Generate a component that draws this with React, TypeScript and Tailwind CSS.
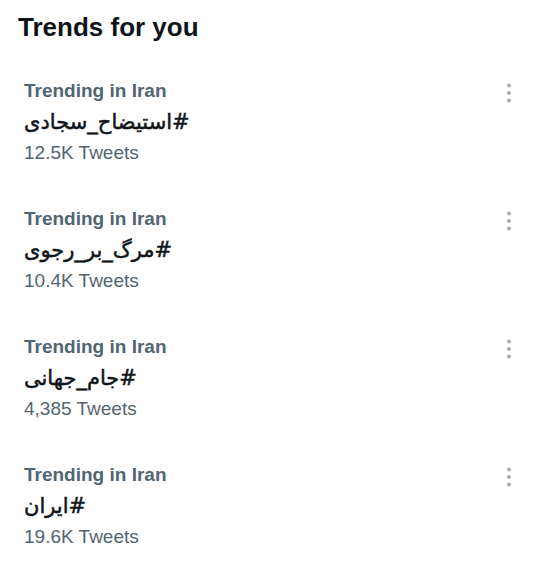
const TRENDS = [
  { tag: '#استیضاح_سجادی', count: '12.5K Tweets' },
  { tag: '#مرگ_بر_رجوی', count: '10.4K Tweets' },
  { tag: '#جام_جهانی', count: '4,385 Tweets' },
  { tag: '#ایران', count: '19.6K Tweets' },
];

function MoreDots() {
  return (
    <svg width="8" height="24" viewBox="0 0 8 24" className="text-[#a3adb7]">
      <circle cx="4" cy="4.5" r="2" fill="currentColor" />
      <circle cx="4" cy="12" r="2" fill="currentColor" />
      <circle cx="4" cy="19.5" r="2" fill="currentColor" />
    </svg>
  );
}

export default function App() {
  return (
    <div className="h-[585px] w-[540px] bg-white pt-[11px] font-['Liberation_Sans',Arial,sans-serif]">
      <h2 className="pl-[18px] text-[26px] font-bold leading-[32px] text-[#0f1419]">Trends for you</h2>
      <ul className="mt-[15px]">
        {TRENDS.map((t) => (
          <li key={t.tag} className="flex items-start justify-between py-[19px] pl-6 pr-[27px]">
            <div>
              <p className="text-[19px] font-bold leading-[28px] text-[#536471]">Trending in Iran</p>
              <p
                dir="rtl"
                className="text-left font-['DejaVu_Sans',sans-serif] text-[21px] leading-[34px] text-[#0f1419] [-webkit-text-stroke:0.5px_#0f1419]"
              >
                {t.tag}
              </p>
              <p className="text-[19px] leading-[28px] text-[#536471]">{t.count}</p>
            </div>
            <div className="mt-[4px]">
              <MoreDots />
            </div>
          </li>
        ))}
      </ul>
    </div>
  );
}
